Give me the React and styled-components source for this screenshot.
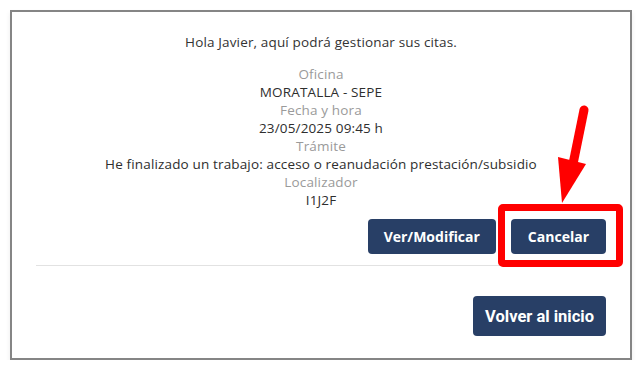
import React from "react";
import styled, { createGlobalStyle } from "styled-components";

const Global = createGlobalStyle`
  html, body { margin: 0; padding: 0; background: #ffffff; }
  body { font-family: "Open Sans", "Liberation Sans", sans-serif; }
`;

const Page = styled.div`
  padding: 10px 11px 0 10px;
`;

const Frame = styled.section`
  box-sizing: border-box;
  width: 622px;
  height: 350px;
  border: 2px solid #858585;
  box-shadow: 0 3px 5px rgba(0, 0, 0, 0.08);
  padding: 21px 24px 0 24px;
  display: flex;
  flex-direction: column;
`;

const Greeting = styled.p`
  margin: 0 0 14px;
  text-align: center;
  font-size: 13.5px;
  letter-spacing: 0.15px;
  line-height: 18px;
  color: #333333;
`;

const Details = styled.dl`
  margin: 0;
  display: flex;
  flex-direction: column;
  align-items: center;
  text-align: center;
  font-size: 13.5px;
  letter-spacing: 0.15px;
  line-height: 18px;
`;

const Label = styled.dt`
  color: #9a9a9a;
`;

const Value = styled.dd`
  margin: 0;
  color: #2e2e2e;
`;

const Actions = styled.div`
  display: flex;
  justify-content: flex-end;
  gap: 15px;
  margin-top: 10px;
  padding-bottom: 11px;
  border-bottom: 1px solid #e2e2e2;
`;

const Button = styled.button`
  box-sizing: border-box;
  height: ${(p) => (p.$large ? "40px" : "35px")};
  padding: 0 ${(p) => p.$px}px;
  border: none;
  border-radius: 4px;
  background: #283f66;
  color: #ffffff;
  font-family: ${(p) => (p.$large ? `Roboto, "Liberation Sans", sans-serif` : `"Open Sans", "Liberation Sans", sans-serif`)};
  font-weight: 700;
  font-size: ${(p) => (p.$large ? "16.5px" : "14px")};
  cursor: pointer;
`;

const Highlight = styled.div`
  position: relative;
  display: flex;
`;

const RedBox = styled.span`
  position: absolute;
  top: -15px;
  left: -13px;
  right: -17px;
  bottom: -13px;
  border: 7px solid #ff0000;
  border-radius: 5px;
  pointer-events: none;
`;

const Arrow = styled.svg`
  position: absolute;
  left: 40px;
  top: -115px;
  width: 55px;
  height: 105px;
  overflow: visible;
  pointer-events: none;
`;

const Footer = styled.div`
  display: flex;
  justify-content: flex-end;
  margin-top: 30px;
`;

export default function App() {
  const rows = [
    ["Oficina", "MORATALLA - SEPE"],
    ["Fecha y hora", "23/05/2025 09:45 h"],
    ["Trámite", "He finalizado un trabajo: acceso o reanudación prestación/subsidio"],
    ["Localizador", "I1J2F"],
  ];
  return (
    <>
      <Global />
      <Page>
        <Frame>
          <Greeting>Hola Javier, aquí podrá gestionar sus citas.</Greeting>
          <Details>
            {rows.map(([l, v]) => (
              <React.Fragment key={l}>
                <Label>{l}</Label>
                <Value>{v}</Value>
              </React.Fragment>
            ))}
          </Details>
          <Actions>
            <Button $px={16}>Ver/Modificar</Button>
            <Highlight>
              <Button $px={17}>Cancelar</Button>
              <RedBox />
              <Arrow viewBox="0 0 55 105">
                <line x1="33" y1="6" x2="22" y2="60" stroke="#ff0000" strokeWidth="9" strokeLinecap="round" />
                <polygon points="7,53 35,60 11,99" fill="#ff0000" />
              </Arrow>
            </Highlight>
          </Actions>
          <Footer>
            <Button $large $px={12}>Volver al inicio</Button>
          </Footer>
        </Frame>
      </Page>
    </>
  );
}
